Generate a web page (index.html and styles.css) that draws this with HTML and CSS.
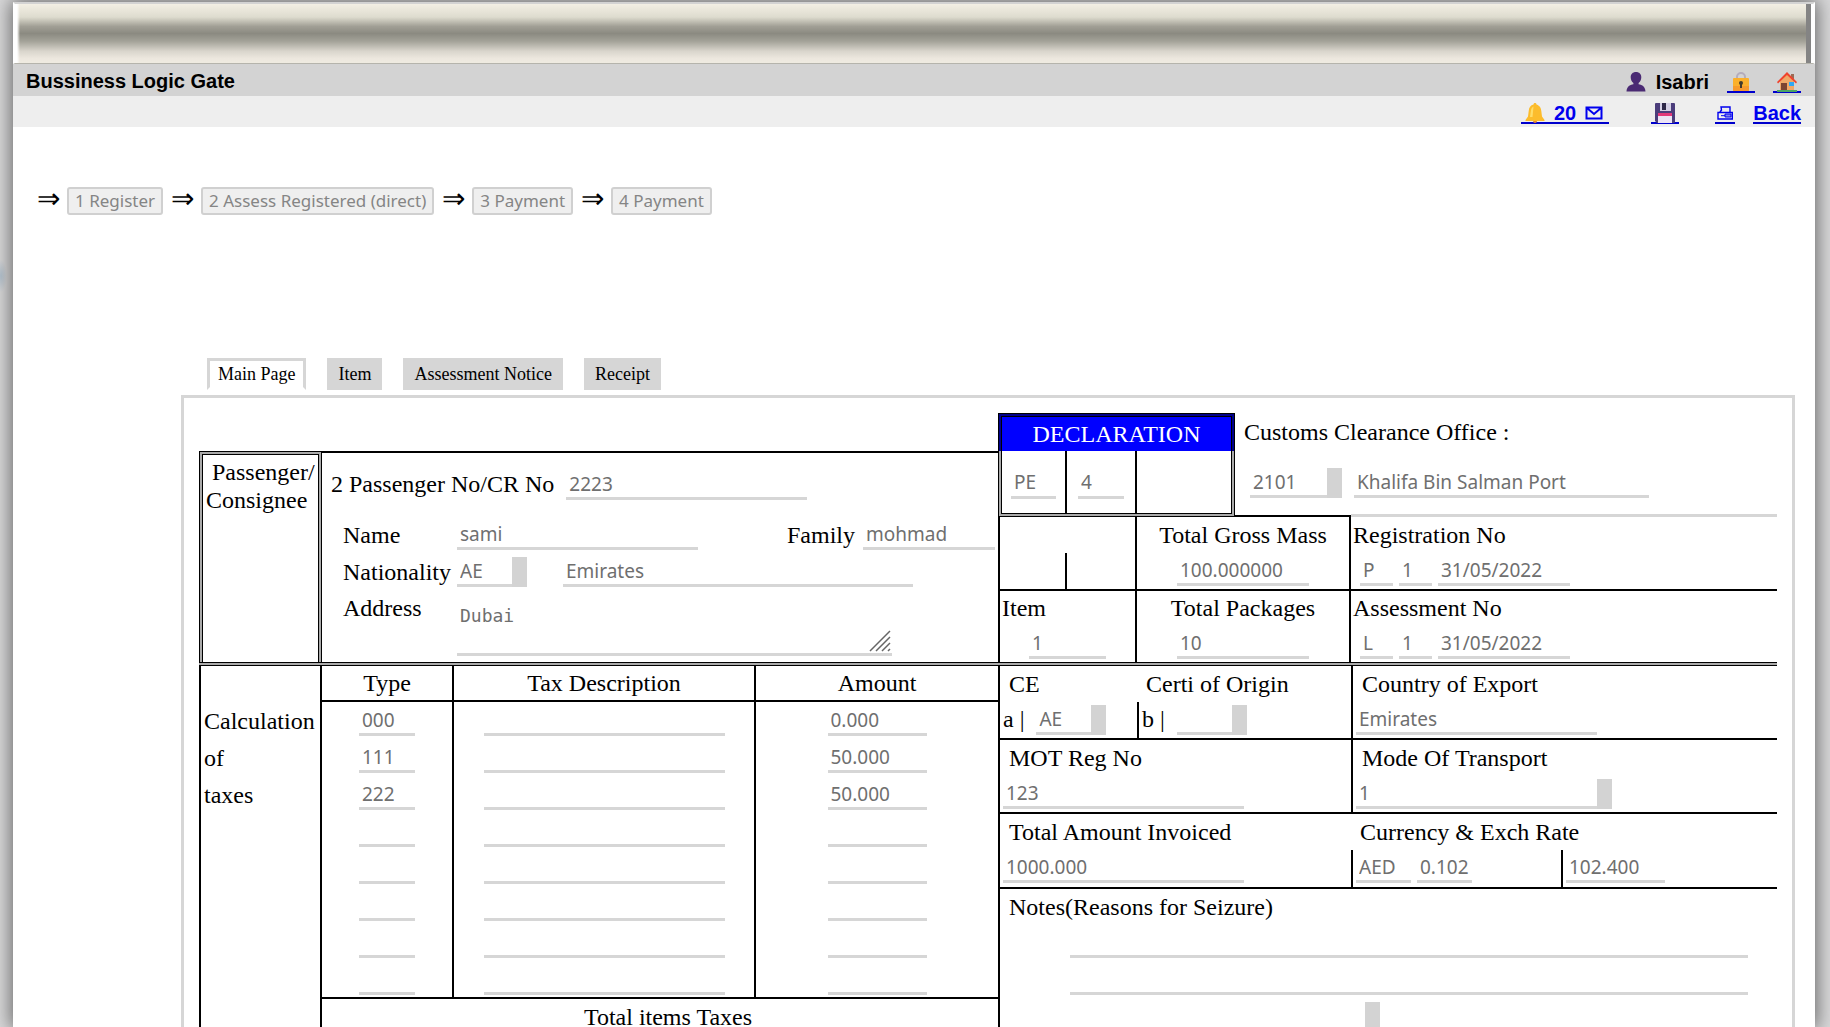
FILE: index.html
```html
<!DOCTYPE html>
<html lang="en">
<head>
<meta charset="utf-8">
<title>Bussiness Logic Gate</title>
<link rel="stylesheet" href="styles.css">
</head>
<body>
<div class="page">
  <header>
    <div class="banner"></div>
    <div class="bar bar-title">
      <h1>Bussiness Logic Gate</h1>
      <div class="user">
        <svg class="icon" viewBox="0 0 20 20"><path d="M10 0c3.300 0 5.300 2.200 5.300 5.200 0 2.600-1.200 4.800-2.700 5.800v1.300c3.800.6 6.600 2.600 6.900 7.200H.5c.3-4.600 3.100-6.600 6.900-7.200V11C5.900 10 4.700 7.800 4.700 5.200 4.700 2.200 6.700 0 10 0z" fill="#4a2a73"/></svg>
        <span>Isabri</span>
      </div>
      <a class="link icon-link" href="#" aria-label="Lock"><svg class="icon" viewBox="0 0 20 20"><path d="M6 7V5a4 4 0 0 1 8 0v2" fill="none" stroke="#b4acbc" stroke-width="2"/><rect x="2" y="6" width="16" height="13" rx="1" fill="#fbb02c"/><path d="M2 14h16v4a1 1 0 0 1-1 1H3a1 1 0 0 1-1-1z" fill="#f79a2d"/><circle cx="10" cy="11" r="2" fill="#433b2c"/><path d="M9 11h2v5H9z" fill="#433b2c"/></svg></a>
      <a class="link icon-link" href="#" aria-label="Home"><svg class="icon" viewBox="0 0 20 20"><path d="M14 2h3v6h-3z" fill="#9b6b55"/><path d="M3 9l7-7 7 7v10H3z" fill="#f0a868"/><path d="M0 10L10 0l10 10-1 1.500L10 3l-9 8.500z" fill="#f0432d"/><path d="M4 11h6v8H4z" fill="#7d4533"/><path d="M12 10h5v4h-5z" fill="#2fa8f5"/><path d="M0 18h20v2H0z" fill="#4ca463"/></svg></a>
    </div>
    <nav class="bar bar-tools">
      <a class="link inbox" href="#"><svg class="icon" viewBox="0 0 20 20"><circle cx="10" cy="18" r="2" fill="#e88a2c"/><path d="M10 0c1 0 1.500.6 1.500 1.500C14.500 2.300 16 4.500 16.300 8l.7 5.500 2.500 3.500v1H.5v-1L3 13.500 3.700 8C4 4.500 5.500 2.300 8.500 1.500 8.500.6 9 0 10 0z" fill="#fcbc2c"/><path d="M6 7c.4-2 1.300-3 2.500-3.500L7.500 14H5z" fill="#ffdd68"/></svg><span>20</span><svg class="mail" viewBox="0 0 18 14"><path d="M1.500 1.500h15v11h-15zM2 2l7 6 7-6" fill="none" stroke="#0000ee" stroke-width="2"/></svg></a>
      <a class="link icon-link save" href="#" aria-label="Save"><svg class="icon" viewBox="0 0 20 20"><path d="M0 1a1 1 0 0 1 1-1h18a1 1 0 0 1 1 1v18a1 1 0 0 1-1 1H2l-2-2z" fill="#4b3d7b"/><path d="M5 0h11v8H5z" fill="#d5d0e4"/><path d="M7 0h4v7H7z" fill="#2d2747"/><path d="M3 11h14v9H3z" fill="#ece4f5"/><path d="M3 10h14v3H3z" fill="#e2387a"/></svg></a>
      <a class="link print" href="#" aria-label="Print"><svg class="printer" viewBox="0 0 16 14"><path d="M3 6L4.500 4 4 1h9v5M1 6.500h14.300v6.500H1z" fill="none" stroke="#0000ee" stroke-width="1.400"/><path d="M4 9.700h4M8 8h6v3H8z" fill="#8080f0" stroke="#0000ee"/></svg></a>
      <a class="link" href="#">Back</a>
    </nav>
  </header>

  <main>
    <div class="steps">
      <span class="arrow">⇒</span><button class="step" type="button">1 Register</button>
      <span class="arrow">⇒</span><button class="step" type="button">2 Assess Registered (direct)</button>
      <span class="arrow">⇒</span><button class="step" type="button">3 Payment</button>
      <span class="arrow">⇒</span><button class="step" type="button">4 Payment</button>
    </div>

    <div class="tabs">
      <button class="tab active" type="button">Main Page</button>
      <button class="tab" type="button">Item</button>
      <button class="tab" type="button">Assessment Notice</button>
      <button class="tab" type="button">Receipt</button>
    </div>

    <form class="panel">
      <section class="half upper-left">
        <div class="who">&nbsp;Passenger/<br>Consignee</div>
        <div class="person">
          <div class="line first">
            <label for="cr">2 Passenger No/CR No</label>
            <input id="cr" class="w-l" value="2223">
          </div>
          <div class="line">
            <label class="cap" for="name">Name</label>
            <input id="name" class="w-l" value="sami">
            <span class="push family"><label for="family">Family</label><input id="family" class="w-m" value="mohmad"></span>
          </div>
          <div class="line">
            <label class="cap" for="nat">Nationality</label>
            <span class="lov"><input id="nat" class="w-s" value="AE"><button type="button" aria-label="Choose nationality"></button></span>
            <input class="w-xl country" value="Emirates" aria-label="Nationality name">
          </div>
          <div class="line top">
            <label class="cap" for="addr">Address</label>
            <span class="area"><textarea id="addr" rows="2">Dubai</textarea><svg class="grip" viewBox="0 0 22 22"><path d="M1 21L21 1M7 21L21 7M13 21l8-8M19 21l2-2" stroke="#666" stroke-width="1.500" fill="none"/></svg></span>
          </div>
        </div>
      </section>

      <section class="half upper-right">
        <div class="office-row">
          <div class="decl">
            <h2>DECLARATION</h2>
            <div class="decl-cells">
              <div><input value="PE" aria-label="Declaration type"></div>
              <div><input value="4" aria-label="Declaration code"></div>
              <div></div>
            </div>
          </div>
          <div class="office">
            <label for="office">Customs Clearance Office :</label>
            <div class="fields">
              <span class="lov"><input id="office" class="w-o" value="2101"><button type="button" aria-label="Choose office"></button></span>
              <input class="w-port" value="Khalifa Bin Salman Port" aria-label="Office name">
            </div>
            <div class="office-rule"><i></i><i></i></div>
          </div>
        </div>
        <div class="totals">
          <div class="cell tick"><i></i></div>
          <div class="cell mid"><label for="mass">Total Gross Mass</label><input id="mass" class="w-m" value="100.000000"></div>
          <div class="cell"><label for="reg">Registration No</label>
            <div class="nums"><input id="reg" class="w-n" value="P"><input class="w-n" value="1" aria-label="Registration number"><input class="w-m" value="31/05/2022" aria-label="Registration date"></div></div>
        </div>
        <div class="totals last">
          <div class="cell item"><label for="items">Item</label><input id="items" value="1"></div>
          <div class="cell mid"><label for="pkgs">Total Packages</label><input id="pkgs" class="w-m" value="10"></div>
          <div class="cell"><label for="ass">Assessment No</label>
            <div class="nums"><input id="ass" class="w-n" value="L"><input class="w-n" value="1" aria-label="Assessment number"><input class="w-m" value="31/05/2022" aria-label="Assessment date"></div></div>
        </div>
      </section>

      <div class="double-rule"></div>

      <section class="half lower-left">
        <div class="side">Calculation<br>of<br>taxes</div>
        <table class="taxes">
          <colgroup><col class="c-type"><col class="c-desc"><col></colgroup>
          <thead><tr><th>Type</th><th>Tax Description</th><th>Amount</th></tr></thead>
          <tbody>
            <tr><td><input class="w-t" value="000" aria-label="Type 1"></td><td><input class="w-l" aria-label="Description 1"></td><td><input class="w-a" value="0.000" aria-label="Amount 1"></td></tr>
            <tr><td><input class="w-t" value="111" aria-label="Type 2"></td><td><input class="w-l" aria-label="Description 2"></td><td><input class="w-a" value="50.000" aria-label="Amount 2"></td></tr>
            <tr><td><input class="w-t" value="222" aria-label="Type 3"></td><td><input class="w-l" aria-label="Description 3"></td><td><input class="w-a" value="50.000" aria-label="Amount 3"></td></tr>
            <tr><td><input class="w-t" aria-label="Type 4"></td><td><input class="w-l" aria-label="Description 4"></td><td><input class="w-a" aria-label="Amount 4"></td></tr>
            <tr><td><input class="w-t" aria-label="Type 5"></td><td><input class="w-l" aria-label="Description 5"></td><td><input class="w-a" aria-label="Amount 5"></td></tr>
            <tr><td><input class="w-t" aria-label="Type 6"></td><td><input class="w-l" aria-label="Description 6"></td><td><input class="w-a" aria-label="Amount 6"></td></tr>
            <tr><td><input class="w-t" aria-label="Type 7"></td><td><input class="w-l" aria-label="Description 7"></td><td><input class="w-a" aria-label="Amount 7"></td></tr>
            <tr><td><input class="w-t" aria-label="Type 8"></td><td><input class="w-l" aria-label="Description 8"></td><td><input class="w-a" aria-label="Amount 8"></td></tr>
          </tbody>
          <tfoot><tr><th colspan="3">Total items Taxes</th></tr></tfoot>
        </table>
      </section>

      <section class="half lower-right">
        <div class="pair">
          <div class="origin">
            <div class="cell"><label class="in" for="ce">CE</label>
              <div class="code"><span>a |</span><span class="lov"><input id="ce" class="w-s" value="AE"><button type="button" aria-label="Choose CE"></button></span></div></div>
            <div class="cell"><label class="in" for="cert">Certi of Origin</label>
              <div class="code half-line"><span>b |</span><span class="lov"><input id="cert" class="w-s"><button type="button" aria-label="Choose origin"></button></span></div></div>
          </div>
          <div class="cell lined"><label class="in" for="exp">Country of Export</label><input id="exp" class="w-l" value="Emirates"></div>
        </div>
        <div class="pair">
          <div class="cell"><label class="in" for="mot">MOT Reg No</label><input id="mot" class="w-l" value="123"></div>
          <div class="cell lined"><label class="in" for="mode">Mode Of Transport</label>
            <span class="lov"><input id="mode" class="w-l" value="1"><button type="button" aria-label="Choose mode"></button></span></div>
        </div>
        <div class="pair">
          <div class="cell"><label class="in" for="inv">Total Amount Invoiced</label><input id="inv" class="w-l" value="1000.000"></div>
          <div class="cell rate"><label class="in" for="cur">Currency &amp; Exch Rate</label>
            <div class="rates"><div><input id="cur" class="w-s" value="AED"><input class="w-s" value="0.102" aria-label="Exchange rate"></div><div><input class="w-a" value="102.400" aria-label="Local amount"></div></div></div>
        </div>
        <div class="cell notes">
          <label class="in" for="note1">Notes(Reasons for Seizure)</label>
          <div class="note-lines"><input id="note1"><input aria-label="Notes, second line"></div>
          <span class="lov reason"><input class="w-l" aria-label="Reason code"><button type="button" aria-label="Choose reason"></button></span>
        </div>
      </section>
    </form>
  </main>
</div>
</body>
</html>
```
FILE: styles.css
```css
* { box-sizing: border-box; }

body {
  margin: 0;
  height: 100vh;
  overflow: hidden;
  padding: 2px 15px 0 13px;
  background: radial-gradient(6px 16px at 1px 276px, #b3c3d0, transparent) no-repeat #d9d9da;
  font: 24px/28px "Liberation Serif", "Times New Roman", serif;
  color: #000;
}

.page {
  height: 100%;
  overflow-y: auto;
  scrollbar-width: none;
  background: #fff;
  box-shadow: 0 0 18px 2px #666;
}

/* header */
.banner {
  height: 62px;
  border: solid #fff;
  border-width: 2px 2px 0;
  border-top-color: #d3d3d3;
  border-bottom: 1px solid #b5b4ac;
  background:
    linear-gradient(#fff, #fff) right / 2px 100% no-repeat,
    linear-gradient(#848484, #848484) right 2px top / 5px 100% no-repeat,
    linear-gradient(90deg, #fff 2px, transparent 5px) left / 6px 100% no-repeat,
    linear-gradient(#f3efe4, #dedccf 22%, #a19f95 38%, #8b8a81 50%, #a3a298 63%, #d9d5cc 80%, #ece7de 92%, #efebe1);
  background-clip: padding-box;
}

.bar {
  display: flex;
  align-items: center;
  gap: 18px;
  padding: 0 14px 0 13px;
  font: bold 20px/22px "Liberation Sans", Arial, sans-serif;
}
.bar-title { height: 32px; padding-top: 4px; background: #d3d3d3; }
.bar-tools { height: 31px; padding-top: 3px; background: #eee; justify-content: flex-end; }
.bar h1 { margin: 0 auto 0 0; padding-bottom: 2px; font-size: 20px; line-height: 22px; }
.user { display: flex; align-items: center; gap: 10px; }
.link {
  display: flex;
  align-items: center;
  height: 22px;
  color: #00e;
  text-decoration: none;
  box-shadow: inset 0 -2px 0 #00c;
}
.icon { width: 20px; height: 20px; }
.icon-link { padding: 0 4px; }
.inbox { gap: 9px; padding: 0 6px 0 4px; }
.mail { width: 18px; height: 14px; }
.save { margin: 0 18px 0 24px; }
.print { padding: 0 2px; }
.printer { width: 16px; height: 14px; }

/* workflow steps */
main { padding: 60px 20px 20px 24px; }
.steps { display: flex; align-items: center; gap: 8px; height: 28px; }
.arrow { display: flex; justify-content: center; width: 22px; padding-bottom: 4px; font-size: 28px; }
.step {
  height: 28px;
  padding: 0 6px;
  border: 2px solid #d0d0d0;
  border-radius: 3px;
  background: #efefef;
  color: #858585;
  font: 17px/24px "Noto Sans", Tahoma, sans-serif;
}

/* tabs */
.tabs { display: flex; gap: 21px; margin: 143px 0 5px 170px; }
.tab {
  height: 32px;
  padding: 0 11px;
  border: 0;
  background: #d6d6d6;
  font: 18px/26px "Liberation Serif", "Times New Roman", serif;
}
.tab.active { padding: 0 8px; border: 3px solid #d6d6d6; border-bottom-color: #fff; background: #fff; }

/* declaration sheet */
.panel {
  display: grid;
  grid-template-columns: 799px minmax(0, 1fr);
  margin-left: 144px;
  padding: 15px;
  border: 3px solid #d6d6d6;
}

input, textarea {
  height: 30px;
  padding: 0 3px;
  border: 0;
  border-bottom: 3px solid #d6d6d6;
  background: transparent;
  color: #6f6f6f;
  font: 19px/26px "Noto Sans", Tahoma, sans-serif;
}
label { display: block; white-space: nowrap; }
.lov { display: flex; }
.lov button { width: 15px; height: 30px; padding: 0; border: 0; background: #d3d3d3; }

.w-n { width: 33px; }
.w-s { width: 55px; }
.w-t { width: 56px; }
.w-o { width: 77px; }
.w-a { width: 99px; }
.w-m { width: 132px; }
.w-l { width: 241px; }
.w-port { width: 295px; }
.w-xl { width: 350px; }

.upper-left { display: flex; padding-top: 38px; }
.who {
  width: 123px;
  padding: 3px 0 0 3px;
  border: 4px double #000;
  border-bottom: 0;
  background: linear-gradient(#fff, #fff) padding-box, #aaa border-box;
}
.person {
  flex: 1;
  display: flex;
  flex-direction: column;
  gap: 7px;
  padding: 17px 3px 6px 9px;
  border-top: 2px solid #000;
}
.line { display: flex; align-items: center; height: 30px; }
.line.first { gap: 12px; margin-bottom: 13px; }
.line.first label { padding-bottom: 2px; }
.line.top { height: auto; align-items: flex-start; }
.cap { width: 126px; padding-left: 12px; }
.push { margin-left: auto; }
.family { display: flex; align-items: center; gap: 8px; }
.country { margin-left: 36px; }
.area { position: relative; display: flex; width: 435px; }
.area textarea {
  width: 100%;
  height: 62px;
  padding: 9px 3px 0;
  resize: none;
  font: 18px/26px "DejaVu Sans Mono", monospace;
}
.grip { position: absolute; right: 1px; bottom: 4px; width: 22px; height: 22px; }

.office-row { display: flex; height: 104px; }
.decl {
  width: 237px;
  border: 4px double #000;
  background: linear-gradient(#00008b 38px, #aaa 38px) border-box;
}
.decl h2 {
  height: 34px;
  margin: 0;
  padding-top: 3px;
  background: #00f;
  color: #fff;
  font-size: 24px;
  font-weight: normal;
  line-height: 28px;
  text-align: center;
}
.decl-cells { display: grid; grid-template-columns: 65px 70px 1fr; height: 62px; background: #fff; }
.decl-cells div { padding: 16px 9px 0; }
.decl-cells div:nth-child(2) { padding: 16px 11px 0; }
.decl-cells div:not(:last-child) { border-right: 2px solid #000; }
.decl-cells input { width: 100%; }
.office { flex: 1; display: flex; flex-direction: column; padding-top: 5px; }
.office label { padding-left: 9px; }
.fields { display: flex; gap: 12px; padding: 22px 0 0 15px; }
.office-rule { display: flex; align-items: flex-end; margin-top: auto; }
.office-rule i:first-child { width: 116px; height: 2px; background: #000; }
.office-rule i:last-child { flex: 1; height: 3px; background: #d6d6d6; }

.totals { display: grid; grid-template-columns: 137px 214px 1fr; height: 74px; border-left: 2px solid #000; border-bottom: 2px solid #000; }
.totals.last { height: 71px; border-bottom: 0; }
.totals .cell { padding-left: 2px; }
.totals .cell:not(:last-child) { border-right: 2px solid #000; }
.cell { display: flex; flex-direction: column; align-items: flex-start; gap: 7px; padding-top: 4px; }
.totals.last .cell { padding-top: 3px; }
.totals .mid { align-items: center; padding-left: 0; }
.tick { justify-content: flex-end; }
.tick i { width: 2px; height: 36px; margin-left: 63px; background: #000; }
.item input { width: 77px; margin-left: 27px; }
.nums { display: flex; gap: 6px; padding-left: 7px; }

.double-rule { grid-column: 1 / -1; height: 4px; border: solid #000; border-width: 1px 0; background: #aaa; }

.lower-left { display: flex; }
.side {
  width: 123px;
  padding: 37px 0 0 3px;
  border: solid #000;
  border-width: 0 2px;
  line-height: 37px;
}
.taxes { flex: 1; align-self: flex-start; border-collapse: separate; border-spacing: 0; table-layout: fixed; width: 676px; }
.c-type { width: 132px; }
.c-desc { width: 302px; }
.taxes th { height: 36px; padding: 0; border-bottom: 2px solid #000; font-weight: normal; }
.taxes td { height: 37px; padding: 4px 0 3px; text-align: center; line-height: 0; }
.taxes thead th:not(:last-child), .taxes td:not(:last-child) { border-right: 2px solid #000; }
.taxes tbody tr:last-child td { padding-bottom: 2px; border-bottom: 2px solid #000; }
.taxes tfoot th { padding-left: 16px; border: 0; height: 36px; }

.lower-right { border-left: 2px solid #000; }
.pair { display: grid; grid-template-columns: 351px 1fr; height: 74px; border-bottom: 2px solid #000; }
.pair:nth-child(3) { height: 75px; }
.pair .cell { padding-left: 3px; }
.pair .lined { border-left: 2px solid #000; }
.in { padding-left: 6px; }
.origin { display: grid; grid-template-columns: 137px 1fr; }
.origin .cell:last-child { padding-left: 0; }
.origin .cell:last-child .in { padding-left: 9px; }
.code { display: flex; gap: 12px; }
.half-line { height: 36px; padding-top: 3px; padding-left: 3px; margin-top: -3px; border-left: 2px solid #000; }
.pair .rate { padding-left: 0; gap: 4px; }
.rate .in { padding-left: 9px; }
.rates { display: flex; }
.rates div { display: flex; gap: 6px; height: 37px; padding: 3px 0 0 3px; border-left: 2px solid #000; }
.rates div:first-child { width: 210px; }
.notes { padding-left: 3px; padding-right: 29px; }
.note-lines { display: flex; flex-direction: column; gap: 7px; width: 100%; padding-left: 67px; }
.reason { margin-left: 121px; }
```
